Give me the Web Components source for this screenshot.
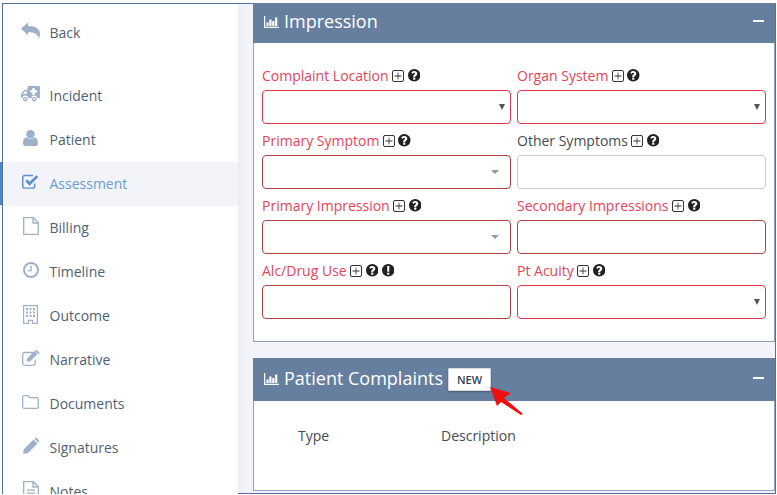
<!DOCTYPE html>
<html>
<head>
<meta charset="utf-8">
<style>
  html, body { margin: 0; height: 100%; overflow: hidden; background: #fff; }
  body { font-family: "Open Sans", sans-serif; }
</style>
</head>
<body>
<app-frame>
  <side-nav slot="side">
    <nav-item icon="back" class="back">Back</nav-item>
    <nav-item icon="ambulance">Incident</nav-item>
    <nav-item icon="user">Patient</nav-item>
    <nav-item icon="check" active>Assessment</nav-item>
    <nav-item icon="file">Billing</nav-item>
    <nav-item icon="clock">Timeline</nav-item>
    <nav-item icon="building">Outcome</nav-item>
    <nav-item icon="edit">Narrative</nav-item>
    <nav-item icon="folder">Documents</nav-item>
    <nav-item icon="pencil">Signatures</nav-item>
    <nav-item icon="notes">Notes</nav-item>
  </side-nav>
  <form-panel class="first">
    <span slot="title">Impression</span>
    <form-grid>
      <form-field label="Complaint Location" kind="select" state="bright"></form-field>
      <form-field label="Organ System" kind="select" state="bright"></form-field>
      <form-field label="Primary Symptom" kind="combo" state="dark"></form-field>
      <form-field label="Other Symptoms" state="plain"></form-field>
      <form-field label="Primary Impression" kind="combo" state="dark"></form-field>
      <form-field label="Secondary Impressions" state="dark"></form-field>
      <form-field label="Alc/Drug Use" state="dark" alert></form-field>
      <form-field label="Pt Acuity" kind="select" state="bright"></form-field>
    </form-grid>
  </form-panel>
  <form-panel>
    <span slot="title">Patient Complaints</span>
    <new-button slot="action">NEW</new-button>
    <complaint-table></complaint-table>
  </form-panel>
</app-frame>

<script>
const ICONS = {
  back: '<svg width="19" height="17" viewBox="0 0 19 17"><path d="M0 6.500 7 .5v3.600c6.600 0 12 2.300 12 8 0 2-.8 3.600-1.300 4.400-.6-4.500-4-6.300-10.700-6.300v3.300z"/></svg>',
  ambulance: '<svg width="19" height="16" viewBox="0 0 20 17"><path fill-rule="evenodd" d="M7 0h12a1 1 0 0 1 1 1v11a1 1 0 0 1-1 1h-2a3 3 0 0 0-6 0H7.500a3 3 0 0 0-6 0H1a1 1 0 0 1-1-1V8.500L3.500 4H7zM12 2v2.500H9.500v2.500H12v2.500h2.500V7H17V4.500h-2.500V2zM4 5.500 1.800 8.500H6V5.500z"/><circle cx="4.500" cy="14" r="2.400"/><circle cx="14" cy="14" r="2.400"/><circle cx="4.500" cy="14" r="1" fill="#fff"/><circle cx="14" cy="14" r="1" fill="#fff"/></svg>',
  user: '<svg width="15" height="16" viewBox="0 0 16 17"><circle cx="8" cy="4.500" r="4.500"/><path d="M0 14c0-4 1.500-6 4-6 1 1 2.400 1.500 4 1.500S11 9 12 8c2.500 0 4 2 4 6 0 2-1.200 3-2.800 3H2.800C1.200 17 0 16 0 14z"/></svg>',
  check: '<svg width="17" height="16" viewBox="0 0 18 16"><path fill="none" stroke="currentColor" stroke-width="1.500" d="M13.500 9.500v2.700c0 1.500-.8 2.300-2.300 2.300H3.100c-1.500 0-2.300-.8-2.300-2.300V3.400c0-1.500.8-2.300 2.300-2.300h8.600"/><path d="M3.500 7.200 5.500 5.200 8 7.700 15.200.8l2 2L8 12z"/></svg>',
  file: '<svg width="16" height="18" viewBox="0 0 16 18"><path fill="none" stroke="currentColor" stroke-width="1.300" d="M.7.700h9.600l5 5v11.600H.7zM10 .7v5.300h5.300"/></svg>',
  clock: '<svg width="16" height="16" viewBox="0 0 16 16"><circle cx="8" cy="8" r="7" fill="none" stroke="currentColor" stroke-width="2"/><path d="M7.300 3.500h1.400v5.700H4.800V7.900h2.500z"/></svg>',
  building: '<svg width="15" height="19" viewBox="0 0 15 19"><path fill-rule="evenodd" d="M0 0h15v19H9v-3H6v3H0zM1.200 1.200v16.600h3.600v-3h5.400v3h3.600V1.200z"/><path d="M3 3h2v2H3zM6.500 3h2v2h-2zM10 3h2v2h-2zM3 6.500h2v2H3zM6.500 6.500h2v2h-2zM10 6.500h2v2h-2zM3 10h2v2H3zM6.500 10h2v2h-2zM10 10h2v2h-2z"/></svg>',
  edit: '<svg width="18" height="16" viewBox="0 0 18 16"><path fill="none" stroke="currentColor" stroke-width="1.300" d="M13.300 9.500v3.300c0 1.400-.8 2.500-2.500 2.500H3.100C1.500 15.300.7 14.200.7 12.800V5c0-1.500.8-2.500 2.400-2.500h8"/><path d="M5 8.500 12.500 1l3 3L8 11.500H5zM13.500 0l1-.1L18 3l-1.500 1.200-3.500-3.400z"/></svg>',
  folder: '<svg width="17" height="14" viewBox="0 0 17 14"><path fill="none" stroke="currentColor" stroke-width="1.300" d="M.7 12V2.200C.7 1.300 1.300.7 2.200.7h3.300c.9 0 1.400.5 1.600 1.200l.3.700h7.300c.9 0 1.600.6 1.600 1.500V12c0 .9-.7 1.300-1.600 1.300H2.200C1.300 13.300.7 12.900.7 12z"/></svg>',
  pencil: '<svg width="16" height="16" viewBox="0 0 16 16"><path d="M0 16 1 11 10.500 1.500l4 4L5 15zM11.500.7 12.200 0c.5-.3 1-.3 1.500.1l2.100 2.100c.4.500.4 1 .1 1.500l-.7.700z"/></svg>',
  notes: '<svg width="16" height="18" viewBox="0 0 16 18"><path fill="none" stroke="currentColor" stroke-width="1.300" d="M.7.700h9.600l5 5v11.600H.7zM10 .7v5.300h5.300"/><path d="M4 8.500h8v1.300H4zM4 11.500h8v1.300H4zM4 14.500h8v1.300H4z"/></svg>'
};

const CHART = '<svg width="15" height="12" viewBox="0 0 15 12" fill="#fff"><path d="M0 0h1.200v10.800H15V12H0z"/><path d="M2.400 6.500h2.200V10H2.400zM5.300 3.500h2.200V10H5.300zM8.200 5h2.200v5H8.200zM11.100 1.500h2.200V10h-2.200z"/></svg>';
const PLUS = '<svg width="12" height="12" viewBox="0 0 12 12"><rect x=".5" y=".5" width="11" height="11" rx="1.500" fill="none" stroke="#333"/><path d="M2.500 5.600h3.100V2.500h.8v3.100h3.100v.8H6.400v3.100h-.8V6.400H2.500z" fill="#333"/></svg>';
const QUESTION = '<svg width="12.500" height="12.500" viewBox="0 0 12 12"><path fill="#222" fill-rule="evenodd" d="M6 0a6 6 0 1 1 0 12A6 6 0 0 1 6 0zM5 8.500V10.200h2V8.500zM6 2C4.700 2 3.700 2.600 3.200 3.700l1.300 1C4.800 4.100 5.200 3.700 5.900 3.700c.5 0 .9.300.9.700 0 .5-.4.700-.9 1C5.400 5.800 5 6.300 5 7v.8h2v-.5c0-.4.300-.6.800-.9.700-.4 1.100-1 1.100-2C8.900 3 7.600 2 6 2z"/></svg>';
const ALERT = '<svg width="12.500" height="12.500" viewBox="0 0 12 12"><path fill="#222" fill-rule="evenodd" d="M6 0a6 6 0 1 1 0 12A6 6 0 0 1 6 0zM4.900 2l.2 5.500h1.800L7.100 2zM5 8.500v1.800h2V8.500z"/></svg>';

class AppFrame extends HTMLElement {
  constructor() {
    super();
    this.attachShadow({ mode: 'open' }).innerHTML = `
      <style>
        :host { display: block; box-sizing: border-box; height: 495px; padding: 3px 1px 1px 2px; }
        .frame { box-sizing: border-box; height: 100%; border: 1px solid #5270a0; background: #f2f4f9; display: flex; clip-path: inset(0 0 0 -3px); }
        .side { display: block; width: 235px; flex: none; }
        .main { flex: 1; min-width: 0; padding-left: 15px; margin-top: -4px; }
      </style>
      <div class="frame">
        <div class="side"><slot name="side"></slot></div>
        <div class="main"><slot></slot></div>
      </div>`;
  }
}

class SideNav extends HTMLElement {
  constructor() {
    super();
    this.attachShadow({ mode: 'open' }).innerHTML = `
      <style>
        :host { display: block; background: #fff; padding-top: 6px; height: 600px; box-shadow: 0 0 8px rgba(60, 80, 110, .08); }
      </style>
      <slot></slot>`;
  }
}

class NavItem extends HTMLElement {
  constructor() {
    super();
    const icon = ICONS[this.getAttribute('icon')] || '';
    this.attachShadow({ mode: 'open' }).innerHTML = `
      <style>
        :host { display: flex; align-items: center; position: relative; box-sizing: border-box; height: 44px; padding-bottom: 2px; font-size: 14px; color: #4f5f75; }
        :host(.back) { padding-bottom: 0; margin-bottom: 20px; }
        :host([active]) { background: #f2f4f9; color: #6d9bd6; }
        :host([active])::before { content: ""; position: absolute; left: -3px; top: 0; bottom: 1px; width: 2px; background: #4d87c7; }
        .icon { width: 19px; margin-left: 18px; margin-right: 9.500px; flex: none; display: flex; justify-content: center; color: #9db2c8; fill: currentColor; transform: translateY(-1px); }
        :host(.back) .icon { transform: translateY(-2px); }
        :host([active]) .icon { color: #5f8fd0; }
      </style>
      <span class="icon">${icon}</span><slot></slot>`;
  }
}

class FormPanel extends HTMLElement {
  constructor() {
    super();
    this.attachShadow({ mode: 'open' }).innerHTML = `
      <style>
        :host { display: block; background: #fff; border: 1px solid #8ea2bd; border-top: 0; margin-bottom: 16px; box-sizing: border-box; }
        header { box-sizing: border-box; height: 43px; background: #667f9f; color: #fff; display: flex; align-items: center; font-size: 18px; padding: 0 11px 3px; margin: 0 -1px 0 -1px; }
        :host(.first) header { padding-bottom: 1px; }
        .chart { display: flex; margin-right: 5px; margin-top: 1px; }
        .minus { margin-left: auto; width: 11px; height: 2px; background: #fff; }
        ::slotted([slot=action]) { margin-left: 5px; }
      </style>
      <header>
        <span class="chart">${CHART}</span>
        <slot name="title"></slot>
        <slot name="action"></slot>
        <span class="minus"></span>
      </header>
      <slot></slot>`;
  }
}

class FormGrid extends HTMLElement {
  constructor() {
    super();
    this.attachShadow({ mode: 'open' }).innerHTML = `
      <style>
        :host { display: grid; grid-template-columns: 249px 249px; column-gap: 6px; row-gap: 6px; padding: 22px 8px 22px; }
      </style>
      <slot></slot>`;
  }
}

class FormField extends HTMLElement {
  constructor() {
    super();
    const kind = this.getAttribute('kind') || 'text';
    const alert = this.hasAttribute('alert') ? ALERT : '';
    this.attachShadow({ mode: 'open' }).innerHTML = `
      <style>
        :host { display: block; font-size: 14px; }
        .label { display: flex; align-items: center; height: 20px; margin-bottom: 5px; gap: 3.500px; color: #e8435a; white-space: nowrap; }
        .label svg { display: block; margin-top: 1px; }
        :host([state=plain]) .label { color: #444c55; }
        .input { box-sizing: border-box; height: 34px; border: 1px solid #e8344a; border-radius: 4px; background: #fff; display: flex; align-items: center; justify-content: flex-end; }
        :host([state=dark]) .input { border-color: #b04040; }
        :host([state=plain]) .input { border-color: #ccc; }
        .arrow { display: none; }
        .select .arrow { display: block; margin-right: 5px; border: 3px solid transparent; border-top: 6px solid #555; border-bottom: 0; border-left-width: 3px; }
        .combo .arrow { display: block; margin-right: 11px; border: 4px solid transparent; border-top: 4px solid #999; border-bottom: 0; }
      </style>
      <div class="label"><span>${this.getAttribute('label')}</span><span>${PLUS}</span><span>${QUESTION}</span>${alert ? `<span>${alert}</span>` : ''}</div>
      <div class="input ${kind}"><span class="arrow"></span></div>`;
  }
}

class NewButton extends HTMLElement {
  constructor() {
    super();
    this.attachShadow({ mode: 'open' }).innerHTML = `
      <style>
        :host { display: block; position: relative; margin-top: 3px; }
        button { display: block; box-sizing: border-box; width: 43px; height: 23px; padding: 0; border: 1px solid #d5d9de; border-radius: 1px; background: #fff; color: #33414f; font: 600 11px "Open Sans", sans-serif; box-shadow: 0 1px 2px rgba(0, 0, 0, .3); }
        svg { position: absolute; left: 42px; top: 19px; }
      </style>
      <button><slot></slot></button>
      <svg width="34" height="30" viewBox="0 0 34 30"><path fill="#f00f0f" d="M0 0 21 6 14 11 33 27 31 28 11 15 7 19z"/></svg>`;
  }
}

class ComplaintTable extends HTMLElement {
  constructor() {
    super();
    this.attachShadow({ mode: 'open' }).innerHTML = `
      <style>
        :host { display: block; height: 89px; box-sizing: border-box; font-size: 14px; color: #444c55; padding: 25px 0 0 44px; }
        .row { display: grid; grid-template-columns: 143px 1fr; line-height: 20px; }
      </style>
      <div class="row"><span>Type</span><span>Description</span></div>`;
  }
}

customElements.define('app-frame', AppFrame);
customElements.define('side-nav', SideNav);
customElements.define('nav-item', NavItem);
customElements.define('form-panel', FormPanel);
customElements.define('form-grid', FormGrid);
customElements.define('form-field', FormField);
customElements.define('new-button', NewButton);
customElements.define('complaint-table', ComplaintTable);
</script>
</body>
</html>
